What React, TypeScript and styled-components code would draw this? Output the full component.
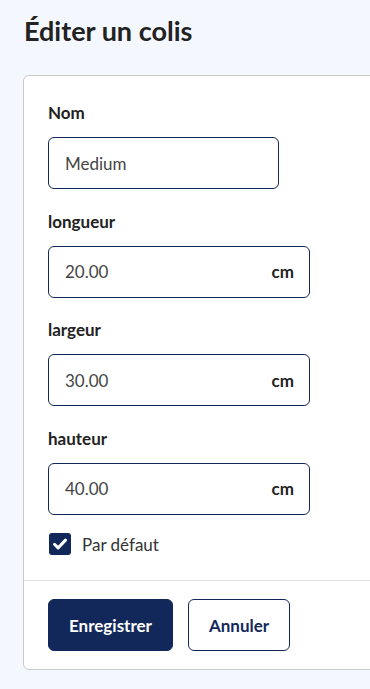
import React from 'react';
import styled, {createGlobalStyle} from 'styled-components';

const GlobalStyle = createGlobalStyle`
  html, body {
    margin: 0;
    padding: 0;
    background-color: #f4f8fe;
    font-family: Lato, "Liberation Sans", sans-serif;
    color: #222;
  }
`;

const Page = styled.div`
  padding: 13px 0 20px 24px;
  width: 100vw;
  box-sizing: border-box;
  overflow: hidden;
`;

const Title = styled.h1`
  margin: 0 0 26px;
  font-size: 27px;
  font-weight: 700;
  line-height: 36px;
  color: #222;
`;

const Card = styled.div`
  margin: 0 -40px 0 -1px;
  background: #fff;
  border: 1px solid #c9c9c9;
  border-radius: 6px;
  box-sizing: border-box;
`;

const CardBody = styled.div`
  padding: 27px 24px 25px;
`;

const Field = styled.div`
  margin-bottom: 22.5px;
`;

const Label = styled.label`
  display: block;
  font-size: 17px;
  font-weight: 700;
  line-height: 20px;
  margin-bottom: 14px;
  color: #222;
`;

const InputBox = styled.div<{$wide?: boolean}>`
  display: flex;
  align-items: center;
  width: ${({$wide}) => ($wide ? '262px' : '231px')};
  height: 52px;
  box-sizing: border-box;
  border: 1px solid #13285a;
  border-radius: 6px;
  padding: 0 15px 0 16px;
  background: #fff;
`;

const Input = styled.input`
  flex: 1;
  min-width: 0;
  border: none;
  outline: none;
  font-family: inherit;
  font-size: 17px;
  color: #444;
  padding: 0;
  background: transparent;
`;

const Unit = styled.span`
  font-size: 17px;
  font-weight: 700;
  color: #222;
`;

const CheckRow = styled.label`
  display: flex;
  align-items: center;
  gap: 11px;
  font-size: 17px;
  color: #333;
  margin-top: -4px;
`;

const CheckBox = styled.span`
  display: inline-flex;
  align-items: center;
  justify-content: center;
  width: 22px;
  height: 22px;
  margin-left: 1px;
  border-radius: 3px;
  background: #13285a;
`;

const Divider = styled.div`
  height: 1px;
  background: #e3e3e3;
`;

const Footer = styled.div`
  display: flex;
  gap: 15px;
  padding: 18px 24px 18px;
`;

const Button = styled.button<{$primary?: boolean}>`
  height: 52px;
  box-sizing: border-box;
  padding: 0 20px;
  border-radius: 6px;
  border: 1px solid #13285a;
  font-family: inherit;
  font-size: 17px;
  font-weight: 700;
  background: ${({$primary}) => ($primary ? '#13285a' : '#fff')};
  color: ${({$primary}) => ($primary ? '#fff' : '#13285a')};
`;

const dims = [
    {label: 'longueur', value: '20.00'},
    {label: 'largeur', value: '30.00'},
    {label: 'hauteur', value: '40.00'},
];

const App = () => {
    return (
        <>
            <GlobalStyle/>
            <Page>
                <Title>Éditer un colis</Title>
                <Card>
                    <CardBody>
                        <Field>
                            <Label>Nom</Label>
                            <InputBox>
                                <Input defaultValue="Medium"/>
                            </InputBox>
                        </Field>
                        {dims.map((d) => (
                            <Field key={d.label}>
                                <Label>{d.label}</Label>
                                <InputBox $wide>
                                    <Input defaultValue={d.value}/>
                                    <Unit>cm</Unit>
                                </InputBox>
                            </Field>
                        ))}
                        <CheckRow>
                            <CheckBox>
                                <svg width="16" height="16" viewBox="0 0 16 16">
                                    <path d="M2.5 8.3l3.6 3.6 7.4-7.8" fill="none" stroke="#fff" strokeWidth="3"
                                          strokeLinecap="round" strokeLinejoin="round"/>
                                </svg>
                            </CheckBox>
                            Par défaut
                        </CheckRow>
                    </CardBody>
                    <Divider/>
                    <Footer>
                        <Button $primary>Enregistrer</Button>
                        <Button>Annuler</Button>
                    </Footer>
                </Card>
            </Page>
        </>
    );
};

export default App;
